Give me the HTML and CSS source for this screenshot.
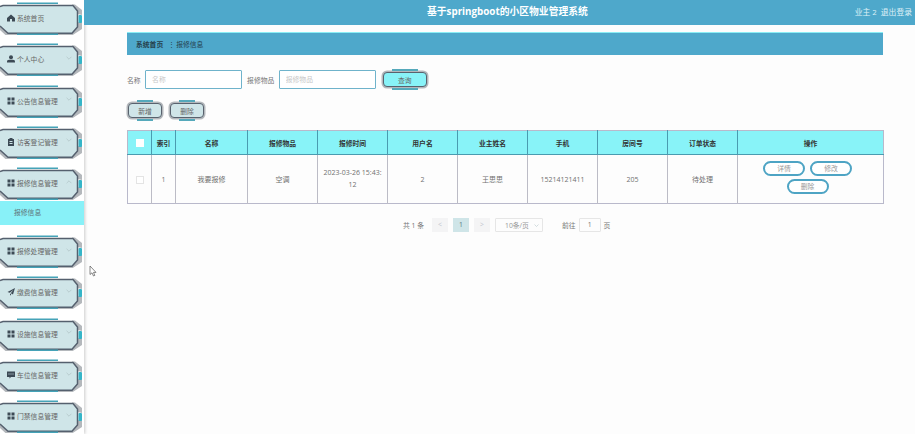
FILE: index.html
```html
<!DOCTYPE html>
<html lang="zh-CN">

<head>
    <meta charset="UTF-8">
    <meta name="viewport" content="width=device-width, initial-scale=1.0">
    <title>基于springboot的小区物业管理系统</title>
    <link rel="stylesheet" href="styles.css">
</head>

<body>

    <!-- 图标和菜单边框 -->
    <svg class="defs" width="0" height="0">
        <symbol id="frame" viewBox="0 0 84 34">
            <path d="M17 2.2H58" stroke="#45a3b8" stroke-width="1.6" fill="none"/>
            <path d="M0 29L6 34.5H72L82 28V21H76V27L70 31H8L0 25Z" fill="#b4b8bc"/>
            <path d="M72 3.5H75L82 9V14L78 13L72 6Z" fill="#b4b8bc"/>
            <path d="M0 6L3 4.6H73L77.5 10V26L72 32H8L0 25Z" fill="#cfe5e8"/>
            <path d="M0 5.6L3 4.6H73L77.5 10V26L72 32.2H8L0 25" fill="none" stroke="#55606e" stroke-width="1.5"/>
            <path d="M17 33.2H58" stroke="#45a3b8" stroke-width="1.6" fill="none"/>
            <rect x="78.5" y="14" width="3.5" height="8" rx="1" fill="#35b5c8"/>
        </symbol>
        <symbol id="i-home" viewBox="0 0 16 16">
            <path d="M8 1L16 8V15H10V10H6V15H0V8Z" fill="#3d4a55"/>
        </symbol>
        <symbol id="i-user" viewBox="0 0 16 16">
            <circle cx="8" cy="4.5" r="4" fill="#3d4a55"/>
            <path d="M0 15V12.5C0 10 3 9.5 8 9.5S16 10 16 12.5V15Z" fill="#3d4a55"/>
        </symbol>
        <symbol id="i-grid" viewBox="0 0 16 16">
            <path d="M1 1H7V7H1ZM9 1H15V7H9ZM1 9H7V15H1ZM9 9H15V15H9Z" fill="#3d4a55"/>
        </symbol>
        <symbol id="i-note" viewBox="0 0 16 16">
            <path d="M2 2H5V0H11V2H14V16H2ZM5 6V8H11V6ZM5 10V12H11V10Z" fill="#3d4a55" fill-rule="evenodd"/>
        </symbol>
        <symbol id="i-send" viewBox="0 0 16 16">
            <path d="M16 0L12 13L7.5 10.5L13 3.5L5.5 9.5L1 8ZM6 11L8.5 12.5L6 15.5Z" fill="#3d4a55"/>
        </symbol>
        <symbol id="i-chat" viewBox="0 0 16 16">
            <path d="M0 1H16V12H8L5 15V12H0ZM3 5V7H5V5ZM7 5V7H9V5ZM11 5V7H13V5Z" fill="#3d4a55" fill-rule="evenodd"/>
        </symbol>
        <symbol id="i-down" viewBox="0 0 10 6">
            <path d="M1 1L5 5L9 1" fill="none" stroke="#a9bcc0" stroke-width="1"/>
        </symbol>
        <symbol id="i-up" viewBox="0 0 10 6">
            <path d="M1 5L5 1L9 5" fill="none" stroke="#a9bcc0" stroke-width="1"/>
        </symbol>
    </svg>

    <!-- 左侧菜单 -->
    <aside class="sidebar">
        <div class="menu-item">
            <svg class="frame"><use href="#frame"/></svg>
            <svg class="icon"><use href="#i-home"/></svg>
            <span>系统首页</span>
        </div>
        <div class="menu-item">
            <svg class="frame"><use href="#frame"/></svg>
            <svg class="icon"><use href="#i-user"/></svg>
            <span>个人中心</span>
            <svg class="arrow"><use href="#i-down"/></svg>
        </div>
        <div class="menu-item">
            <svg class="frame"><use href="#frame"/></svg>
            <svg class="icon"><use href="#i-grid"/></svg>
            <span>公告信息管理</span>
            <svg class="arrow"><use href="#i-down"/></svg>
        </div>
        <div class="menu-item">
            <svg class="frame"><use href="#frame"/></svg>
            <svg class="icon"><use href="#i-note"/></svg>
            <span>访客登记管理</span>
            <svg class="arrow"><use href="#i-down"/></svg>
        </div>
        <div class="menu-item open">
            <svg class="frame"><use href="#frame"/></svg>
            <svg class="icon"><use href="#i-grid"/></svg>
            <span>报修信息管理</span>
            <svg class="arrow"><use href="#i-up"/></svg>
        </div>
        <div class="submenu-item">报修信息</div>
        <div class="menu-item">
            <svg class="frame"><use href="#frame"/></svg>
            <svg class="icon"><use href="#i-grid"/></svg>
            <span>报修处理管理</span>
            <svg class="arrow"><use href="#i-down"/></svg>
        </div>
        <div class="menu-item">
            <svg class="frame"><use href="#frame"/></svg>
            <svg class="icon"><use href="#i-send"/></svg>
            <span>缴费信息管理</span>
            <svg class="arrow"><use href="#i-down"/></svg>
        </div>
        <div class="menu-item">
            <svg class="frame"><use href="#frame"/></svg>
            <svg class="icon"><use href="#i-grid"/></svg>
            <span>设施信息管理</span>
            <svg class="arrow"><use href="#i-down"/></svg>
        </div>
        <div class="menu-item">
            <svg class="frame"><use href="#frame"/></svg>
            <svg class="icon"><use href="#i-chat"/></svg>
            <span>车位信息管理</span>
            <svg class="arrow"><use href="#i-down"/></svg>
        </div>
        <div class="menu-item">
            <svg class="frame"><use href="#frame"/></svg>
            <svg class="icon"><use href="#i-grid"/></svg>
            <span>门禁信息管理</span>
            <svg class="arrow"><use href="#i-down"/></svg>
        </div>
    </aside>

    <div class="main">
        <!-- 顶部标题 -->
        <header class="topbar">
            <div class="title">基于springboot的小区物业管理系统</div>
            <div class="user-info">
                <span>业主 2</span>
                <span>退出登录</span>
            </div>
        </header>

        <div class="content">
            <div class="breadcrumb">
                <b>系统首页</b>
                <i>⋮</i>
                <span>报修信息</span>
            </div>

            <div class="search">
                <label>名称</label>
                <input class="search-input" placeholder="名称">
                <label>报修物品</label>
                <input class="search-input" placeholder="报修物品">
                <button class="btn btn-query">查询</button>
            </div>

            <div class="actions">
                <button class="btn">新增</button>
                <button class="btn">删除</button>
            </div>

            <table class="table">
                <thead>
                    <tr>
                        <th class="col-check"><span class="check check-head"></span></th>
                        <th class="col-index">索引</th>
                        <th class="col-name">名称</th>
                        <th>报修物品</th>
                        <th>报修时间</th>
                        <th>用户名</th>
                        <th>业主姓名</th>
                        <th>手机</th>
                        <th>房间号</th>
                        <th>订单状态</th>
                        <th class="col-ops">操作</th>
                    </tr>
                </thead>
                <tbody>
                    <tr>
                        <td><span class="check"></span></td>
                        <td>1</td>
                        <td>我要报修</td>
                        <td>空调</td>
                        <td class="time">2023-03-26 15:43:12</td>
                        <td>2</td>
                        <td>王思思</td>
                        <td>15214121411</td>
                        <td>205</td>
                        <td>待处理</td>
                        <td>
                            <div class="ops">
                                <button class="pill">详情</button>
                                <button class="pill">修改</button>
                                <button class="pill">删除</button>
                            </div>
                        </td>
                    </tr>
                </tbody>
            </table>

            <div class="pager">
                <span class="total">共 1 条</span>
                <span class="page-btn">&lt;</span>
                <span class="page-btn current">1</span>
                <span class="page-btn">&gt;</span>
                <span class="page-size">10条/页<svg class="size-arrow"><use href="#i-down"/></svg></span>
                <span class="goto">前往</span>
                <span class="page-input">1</span>
                <span>页</span>
            </div>
        </div>
    </div>

    <!-- 鼠标指针 -->
    <svg class="cursor" viewBox="0 0 8 12">
        <path d="M1 1V9.5L3 7.8L4.5 11L5.8 10.4L4.5 7.4H7Z" fill="#fff" stroke="#555" stroke-width="0.7"/>
    </svg>

</body>

</html>
```

FILE: styles.css
```css
/* 基础样式 */
* {
    box-sizing: border-box;
}

body {
    margin: 0;
    display: flex;
    min-height: 434px;
    height: 434px;
    overflow: hidden;
    background: #fdfdfd;
    color: #666;
    font-family: "Open Sans", "Noto Sans CJK SC", sans-serif;
    font-size: 7px;
}

.defs {
    position: absolute;
}

/* 左侧菜单 */
.sidebar {
    flex: none;
    width: 84px;
    padding-top: 1px;
    background: #fff;
    box-shadow: 1px 0 3px rgba(0, 0, 0, 0.2);
    overflow: hidden;
}

.menu-item {
    position: relative;
    display: flex;
    align-items: center;
    height: 34px;
    margin-bottom: 7.3px;
    padding: 0 0 0 7px;
    color: #666;
    font-size: 6.8px;
}

.menu-item.open {
    margin-bottom: 1px;
}

.frame {
    position: absolute;
    top: 0;
    left: 0;
    width: 84px;
    height: 34px;
}

.menu-item span,
.icon,
.arrow {
    position: relative;
}

.icon {
    flex: none;
    width: 8px;
    height: 8px;
    margin-right: 2px;
}

.arrow {
    width: 6px;
    height: 4px;
    margin-left: auto;
    margin-right: 12px;
    margin-top: -3px;
}

.submenu-item {
    height: 24px;
    margin-bottom: 9px;
    padding-left: 14px;
    background: #88f1f8;
    color: #5f7378;
    font-size: 6.8px;
    line-height: 24px;
}

/* 顶部标题 */
.main {
    flex: 1;
    min-width: 0;
}

.topbar {
    position: relative;
    display: flex;
    align-items: center;
    justify-content: flex-end;
    height: 25px;
    padding-right: 3px;
    background: #4ea8cb;
    color: #dff1f7;
}

.title {
    position: absolute;
    left: 343px;
    top: 4px;
    color: #fff;
    font-size: 9.8px;
    font-weight: 700;
    line-height: 15px;
}

.user-info {
    display: flex;
    gap: 4px;
    margin-top: -2px;
    font-size: 7.8px;
}

.content {
    padding: 7px 32px 0 43px;
}

.breadcrumb {
    display: flex;
    align-items: center;
    height: 23px;
    padding-left: 9px;
    background: #4ea8cb;
    border-top: 1px solid #8aeef5;
    color: #25404c;
    font-size: 6.8px;
}

.breadcrumb b {
    font-weight: 700;
}

.breadcrumb i {
    margin: 0 1px 0 5px;
    font-style: normal;
}

/* 查询栏 */
.search {
    display: flex;
    align-items: center;
    height: 19px;
    margin-top: 15px;
    color: #777;
    font-size: 6.8px;
}

.search label {
    margin-right: 4.5px;
}

.search-input {
    width: 97px;
    height: 19px;
    margin-right: 5px;
    padding: 0 6px;
    border: 1.5px solid #6fb3cb;
    border-radius: 1px;
    background: #fff;
    font-family: inherit;
    font-size: 6.8px;
}

.search-input::placeholder {
    color: #c8c8c8;
}

.btn {
    position: relative;
    width: 34px;
    height: 15px;
    padding: 0;
    border: 1.5px solid #59626e;
    border-radius: 4px;
    background: #cfe5e8;
    box-shadow: 0 0 0 1.5px #b4b8bc;
    color: #666;
    font-family: inherit;
    font-size: 6.8px;
}

.btn::before,
.btn::after {
    content: "";
    position: absolute;
    left: 8px;
    right: 8px;
    height: 1.5px;
    background: #55a9bb;
}

.btn::before {
    top: -4px;
}

.btn::after {
    bottom: -3.5px;
}

.btn-query {
    width: 44px;
    height: 15px;
    margin-left: 2px;
    background: #88f3f8;
}

.actions {
    display: flex;
    gap: 8px;
    margin-top: 14px;
    padding: 0 1px;
}

/* 表格 */
.table {
    width: 756px;
    margin-top: 12px;
    border-collapse: collapse;
    table-layout: fixed;
    border: 1.5px solid #b9b9cb;
    text-align: center;
}

.table th {
    width: 70px;
    height: 24px;
    padding: 0;
    border-left: 1.5px solid #4a9bb0;
    border-bottom: 1px solid #4a9bb0;
    background: #88f3f8;
    color: #333;
    font-size: 6.8px;
    font-weight: 700;
}

.table td {
    height: 49px;
    padding: 0;
    border-left: 1.5px solid #bcbcc6;
    color: #707070;
    font-size: 7px;
}

.table th:first-child,
.table td:first-child {
    border-left: 0;
}

.table th.col-check,
.table th.col-index {
    width: 24px;
}

.table th.col-name {
    width: 72px;
}

.table th.col-ops {
    width: 146px;
}

.table td.time {
    padding: 0 4px;
    line-height: 12px;
    word-break: break-all;
}

.check {
    display: inline-block;
    width: 8px;
    height: 8px;
    border: 1px solid #e4e4e4;
    background: #fff;
    vertical-align: middle;
}

.check-head {
    border: 0;
}

.ops {
    display: flex;
    flex-wrap: wrap;
    justify-content: center;
    gap: 3px 5px;
    margin-bottom: 4px;
    padding: 0 26px 0 20px;
}

.pill {
    width: 42px;
    height: 15px;
    padding: 0;
    border: 2px solid #4ea4c4;
    border-radius: 8px;
    background: #fff;
    color: #999;
    font-family: inherit;
    font-size: 6.8px;
}

/* 分页 */
.pager {
    display: flex;
    align-items: center;
    height: 14px;
    margin-top: 14px;
    padding-left: 276px;
    color: #777;
    font-size: 6.8px;
}

.total {
    margin-right: 8px;
}

.page-btn {
    width: 16px;
    height: 14px;
    margin-right: 5px;
    background: #f4f4f5;
    color: #c0c4cc;
    line-height: 14px;
    text-align: center;
}

.page-btn.current {
    background: #cfe5e8;
    color: #5d7a80;
}

.page-size {
    display: flex;
    align-items: center;
    justify-content: space-between;
    width: 48px;
    height: 14px;
    padding: 0 3px 0 9px;
    border: 1px solid #e6e6e6;
    border-radius: 1px;
    color: #999;
}

.size-arrow {
    width: 5px;
    height: 3px;
}

.goto {
    margin-left: 19px;
    margin-right: 3px;
}

.page-input {
    width: 22px;
    height: 14px;
    margin-right: 3px;
    border: 1px solid #e6e6e6;
    border-radius: 1px;
    line-height: 12px;
    text-align: center;
}

/* 鼠标指针 */
.cursor {
    position: absolute;
    left: 89px;
    top: 265px;
    width: 8px;
    height: 12px;
}
```
